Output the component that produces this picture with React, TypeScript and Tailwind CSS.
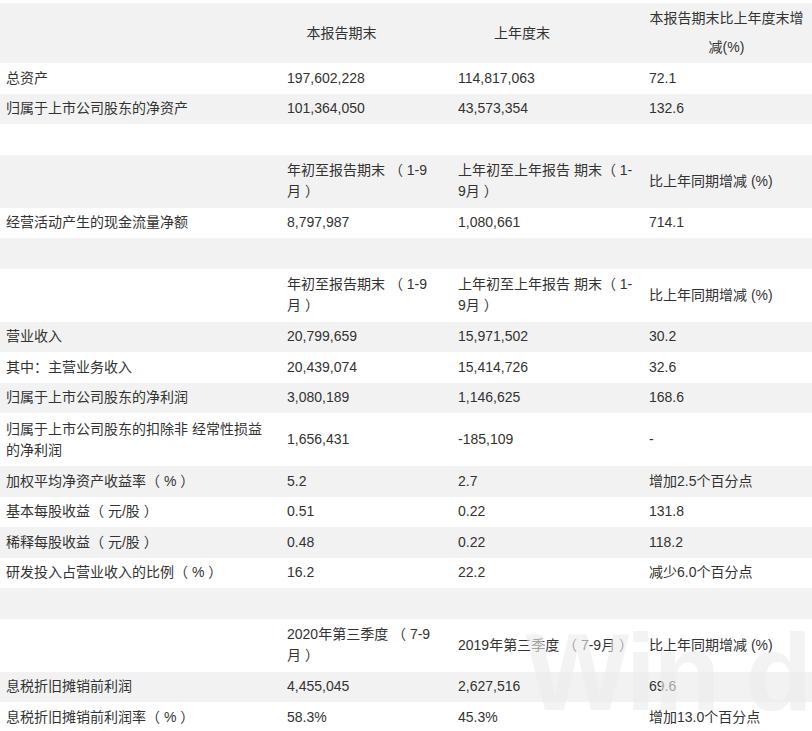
const rows: (string[] | null)[] = [
  ["", "本报告期末", "上年度末", "本报告期末比上年度末增\n减(%)"],
  ["总资产", "197,602,228", "114,817,063", "72.1"],
  ["归属于上市公司股东的净资产", "101,364,050", "43,573,354", "132.6"],
  null,
  ["", "年初至报告期末 （ 1-9\n月 ）", "上年初至上年报告 期末（ 1-\n9月 ）", "比上年同期增减 (%)"],
  ["经营活动产生的现金流量净额", "8,797,987", "1,080,661", "714.1"],
  null,
  ["", "年初至报告期末 （ 1-9\n月 ）", "上年初至上年报告 期末（ 1-\n9月 ）", "比上年同期增减 (%)"],
  ["营业收入", "20,799,659", "15,971,502", "30.2"],
  ["其中：主营业务收入", "20,439,074", "15,414,726", "32.6"],
  ["归属于上市公司股东的净利润", "3,080,189", "1,146,625", "168.6"],
  ["归属于上市公司股东的扣除非 经常性损益\n的净利润", "1,656,431", "-185,109", "-"],
  ["加权平均净资产收益率（ % ）", "5.2", "2.7", "增加2.5个百分点"],
  ["基本每股收益（ 元/股 ）", "0.51", "0.22", "131.8"],
  ["稀释每股收益（ 元/股 ）", "0.48", "0.22", "118.2"],
  ["研发投入占营业收入的比例（ % ）", "16.2", "22.2", "减少6.0个百分点"],
  null,
  ["", "2020年第三季度 （ 7-9\n月 ）", "2019年第三季度 （ 7-9月 ）", "比上年同期增减 (%)"],
  ["息税折旧摊销前利润", "4,455,045", "2,627,516", "69.6"],
  ["息税折旧摊销前利润率（ % ）", "58.3%", "45.3%", "增加13.0个百分点"],
];

const tall = new Set([4, 7, 11, 17]);

export default function App() {
  return (
    <div
      className="relative w-[812px] h-[731px] overflow-hidden bg-white text-[14px] leading-[21px] text-[#333]"
      style={{ fontFamily: '"Liberation Sans", "Noto Sans CJK SC", sans-serif' }}
    >
      <div className="h-[3px]" />
      {rows.map((r, i) => (
        <div
          key={i}
          className={`grid grid-cols-[280px_173px_188px_171px] items-center ${i % 2 === 0 ? "bg-[#f2f2f2]" : "bg-white"} ${i === 0 ? "h-[60px]" : tall.has(i) ? "h-[53px]" : "h-[30.5px]"}`}
        >
          {r ? (
            r.map((c, j) => (
              <div
                key={j}
                className={`whitespace-pre-line ${j === 0 ? "pl-[6px]" : j === 1 ? "pl-[7px]" : j === 2 ? "pl-[5px]" : "pl-[8px]"} ${i === 0 && j > 0 && j < 3 ? "text-center !pl-0 pr-[50px]" : ""} ${i === 0 && j === 3 ? "text-center !pl-0 leading-[29px]" : ""}`}
              >
                {c}
              </div>
            ))
          ) : (
            <div className="h-[30px]" />
          )}
        </div>
      ))}
      <div className="absolute right-[2px] bottom-[4px] text-[110px] font-bold leading-none text-[#ececec] opacity-60 tracking-tight select-none pointer-events-none">
        Win d
      </div>
    </div>
  );
}
